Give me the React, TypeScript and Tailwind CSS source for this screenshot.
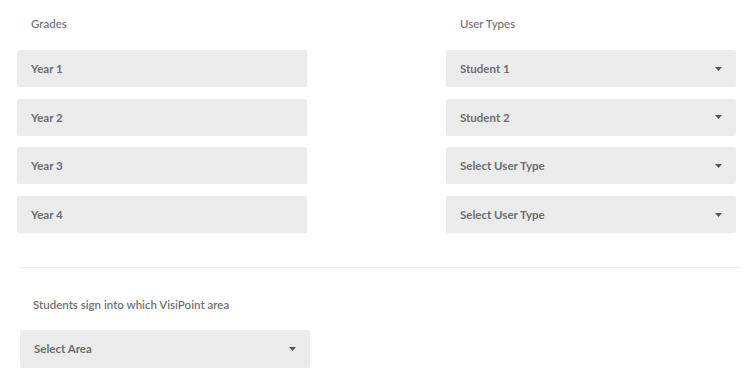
const grades = ["Year 1", "Year 2", "Year 3", "Year 4"];
const userTypes = ["Student 1", "Student 2", "Select User Type", "Select User Type"];

function Caret() {
  return (
    <svg width="7" height="4" viewBox="0 0 7 4" className="shrink-0">
      <path d="M0 0 L7 0 L3.5 4 Z" fill="#555555" />
    </svg>
  );
}

function Field({ label, select, tall }: { label: string; select?: boolean; tall?: boolean }) {
  return (
    <div
      className={
        (tall ? "h-[38px] " : "h-[37px] ") +
        "w-[290px] rounded-[2px] bg-[#ebebeb] flex items-center justify-between pl-[14px] pr-[14px]"
      }
    >
      <span className="text-[11.5px] font-bold text-[#6e6e6e]">{label}</span>
      {select && <Caret />}
    </div>
  );
}

export default function App() {
  return (
    <div
      className="w-[752px] h-[382px] bg-white overflow-hidden"
      style={{ fontFamily: "Lato, 'Noto Sans', sans-serif" }}
    >
      <div className="flex gap-[139px] pl-[17px] pt-[16px]">
        <div className="flex flex-col">
          <div className="h-[16px] pl-[14px] text-[11.5px] leading-[16px] font-medium text-[#707070] mb-[18px]">Grades</div>
          <div className="flex flex-col gap-[11.7px]">
            {grades.map((g) => (
              <Field key={g} label={g} />
            ))}
          </div>
        </div>
        <div className="flex flex-col">
          <div className="h-[16px] pl-[14px] text-[11.5px] leading-[16px] font-medium text-[#707070] mb-[18px]">User Types</div>
          <div className="flex flex-col gap-[11.7px]">
            {userTypes.map((u, i) => (
              <Field key={i} label={u} select />
            ))}
          </div>
        </div>
      </div>

      <div className="ml-[19px] mr-[13px] mt-[34px] border-t border-[#f0f0f0]" />

      <div className="pl-[20px] pt-[29px]">
        <div className="h-[16px] pl-[13px] text-[11.5px] leading-[16px] font-semibold text-[#707070] mb-[17px]">
          Students sign into which VisiPoint area
        </div>
        <Field label="Select Area" select tall />
      </div>
    </div>
  );
}
